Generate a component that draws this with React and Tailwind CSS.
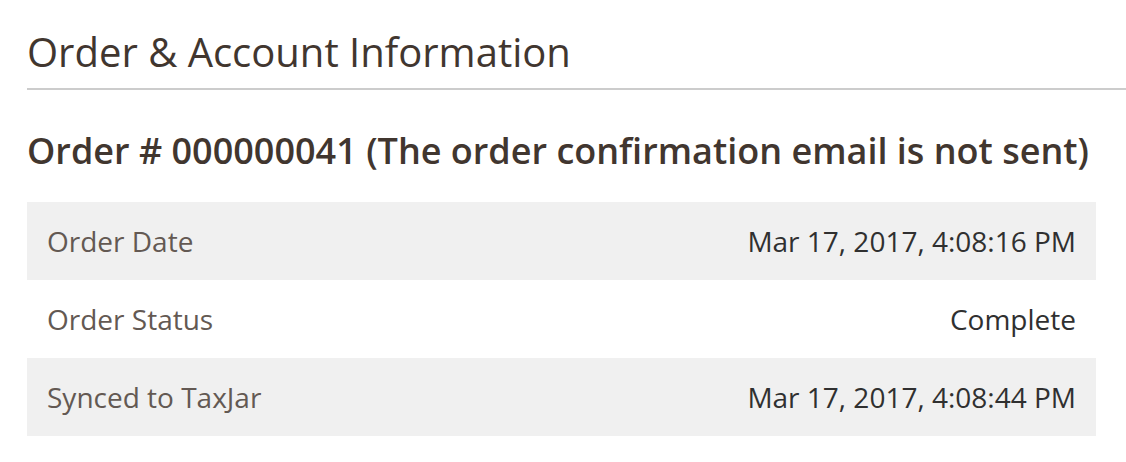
import React from 'react';

const rows = [
  { label: 'Order Date', value: 'Mar 17, 2017, 4:08:16 PM' },
  { label: 'Order Status', value: 'Complete' },
  { label: 'Synced to TaxJar', value: 'Mar 17, 2017, 4:08:44 PM' },
];

const App = () => {
  return (
    <div className="w-[1126px] h-[462px] bg-white pl-[27px] pt-[29px] font-['Open_Sans',sans-serif] overflow-hidden">
      {/* Section title */}
      <div className="border-b-2 border-[#cccccc] pb-[13px]">
        <h2 className="text-[40px] leading-[46px] font-normal text-[#41362f]">Order &amp; Account Information</h2>
      </div>

      {/* Order heading */}
      <h3 className="mt-[41px] text-[36px] leading-[40px] font-semibold text-[#41362f]">
        Order # 000000041 (The order confirmation email is not sent)
      </h3>

      {/* Info table */}
      <div className="mt-[31px] w-[1069px]">
        {rows.map((row, i) => (
          <div
            key={row.label}
            className={`flex items-center justify-between h-[78px] px-[20px] text-[28px] ${i % 2 === 0 ? 'bg-[#f0f0f0]' : 'bg-white'}`}
          >
            <span className="text-[#635953]">{row.label}</span>
            <span className="text-[#303030]">{row.value}</span>
          </div>
        ))}
      </div>
    </div>
  );
};

export default App;
